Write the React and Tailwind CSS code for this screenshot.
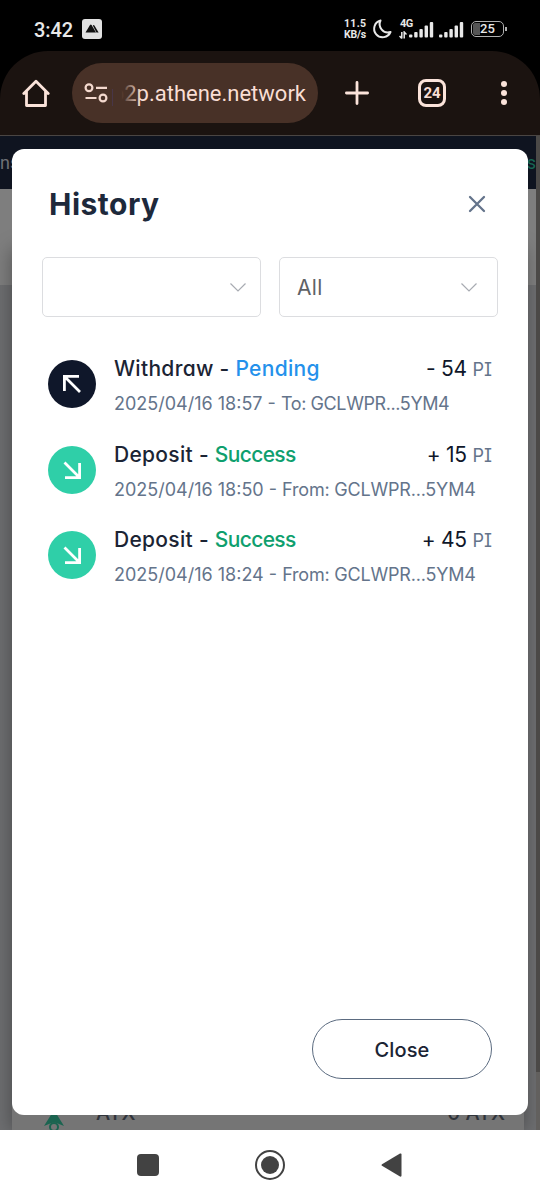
import { useState } from 'react';

const transactions = [
  { type: 'Withdraw', status: 'Pending', date: '2025/04/16 18:57', peer: 'To: GCLWPR...5YM4', amount: '- 54' },
  { type: 'Deposit', status: 'Success', date: '2025/04/16 18:50', peer: 'From: GCLWPR...5YM4', amount: '+ 15' },
  { type: 'Deposit', status: 'Success', date: '2025/04/16 18:24', peer: 'From: GCLWPR...5YM4', amount: '+ 45' },
];

function SignalBars({ className }) {
  return (
    <svg className={className} viewBox="0 0 25 17" fill="#e8e8e8">
      <rect x="0" y="13.5" width="3.4" height="3" rx="1" />
      <rect x="5.2" y="11" width="3.4" height="5.5" rx="1" />
      <rect x="10.4" y="8" width="3.4" height="8.5" rx="1" />
      <rect x="15.6" y="4.5" width="3.4" height="12" rx="1" />
      <rect x="20.8" y="1" width="3.4" height="15.5" rx="1" />
    </svg>
  );
}

function StatusBar() {
  return (
    <div className="h-[51px] flex items-center justify-between pl-[34px] pr-[33px] pt-[7px] text-[#e8e8e8]">
      <div className="flex items-center gap-[9px]">
        <span className="text-[20px] leading-6 font-medium tracking-[-0.1px] pt-[1px]">3:42</span>
        <svg className="w-5 h-5" viewBox="0 0 20 20">
          <rect width="20" height="20" rx="3" fill="#e2e2e2" />
          <path d="M3.5 13.5 8 6q.8-1 1.600 0L14 13.500z" fill="#111" />
          <path d="M10.800 6.500q.8-1 1.800.2l4 6.800h-2.200z" fill="#111" />
        </svg>
      </div>
      <div className="flex items-center">
        <div className="w-[23px] text-[10.500px] leading-[11px] font-bold whitespace-nowrap">
          <p className="tracking-[0.3px]">11.5</p>
          <p className="tracking-[-0.2px]">KB/s</p>
        </div>
        <svg className="w-5 h-5 ml-[5px]" viewBox="0 0 20 20" fill="none" stroke="#e8e8e8" strokeWidth="2" strokeLinejoin="round">
          <path d="M8.500 1.500a8.500 8.500 0 1 0 10 11.500A8.300 8.300 0 0 1 8.500 1.500z" />
        </svg>
        <div className="relative w-[34px] h-[20px] ml-[8px]">
          <span className="absolute left-0 top-[-1px] text-[11px] leading-[11px] font-bold tracking-[-0.5px]">4G</span>
          <svg className="absolute left-[-1px] bottom-0 w-2 h-2" viewBox="0 0 8 8" stroke="#e8e8e8" fill="none" strokeWidth="1.500">
            <path d="M2.800 1v6.500M.5 5l2.300 2.500M5.200 7.500V1l2.300 2.500" />
          </svg>
          <SignalBars className="absolute right-0 bottom-[1px] w-[25px] h-[17px]" />
        </div>
        <SignalBars className="w-[25px] h-[17px] ml-[5px] mt-[1px]" />
        <div className="relative ml-[7px] w-[33px] h-4 rounded-[5px] border-[1.500px] border-[#b0b0b0] flex items-center justify-center overflow-hidden">
          <div className="absolute left-px top-px bottom-px w-[7px] rounded-l-[2px] bg-[#555]" />
          <span className="relative text-[13px] leading-3 font-medium">25</span>
        </div>
        <div className="w-[2px] h-1 bg-[#b0b0b0] ml-[1px]" />
      </div>
    </div>
  );
}

function BrowserBar() {
  return (
    <div className="h-[84px] rounded-t-[48px] bg-[#1b1310] flex items-center pl-[22px] text-[#f9ded4]">
      <svg className="w-7 h-7" viewBox="0 0 28 28" fill="none" stroke="#fbe3da" strokeWidth="2.800" strokeLinejoin="round" strokeLinecap="round">
        <path d="M1.800 14.500 14 2.200l12.200 12.300M4.500 12v14.500h19V12" />
      </svg>
      <div className="ml-[22px] w-[246px] h-[60px] rounded-full bg-[#483127] flex items-center pl-[12px]">
        <svg className="w-6 h-6" viewBox="0 0 24 24" fill="none" stroke="#f4d9ce" strokeWidth="2.200">
          <circle cx="5" cy="6.800" r="3.400" />
          <path d="M12 6.800h11M1.500 17h11" />
          <circle cx="19" cy="17" r="3.400" />
        </svg>
        <div className="relative ml-[5px] w-[193px] h-7 flex justify-end">
          <span className="text-[22px] leading-[30px] whitespace-nowrap">p2p.athene.network</span>
          <div className="absolute left-0 top-0 w-[28px] h-full bg-linear-to-r from-[#483127] from-30% to-transparent" />
        </div>
      </div>
      <svg className="w-6 h-6 ml-[27px]" viewBox="0 0 24 24" stroke="#fbe3da" strokeWidth="2.800" strokeLinecap="round">
        <path d="M12 1.400v21.200M1.400 12h21.200" />
      </svg>
      <div className="ml-[49px] w-7 h-7 rounded-[8px] border-3 border-[#fbe3da] flex items-center justify-center">
        <span className="text-[15px] leading-4 font-bold">24</span>
      </div>
      <div className="ml-[55px] flex flex-col gap-[3px]">
        <div className="w-1.5 h-1.5 rounded-full bg-[#fbe3da]" />
        <div className="w-1.5 h-1.5 rounded-full bg-[#fbe3da]" />
        <div className="w-1.5 h-1.5 rounded-full bg-[#fbe3da]" />
      </div>
    </div>
  );
}

function Select({ value }) {
  return (
    <div className={`w-[219px] h-[60px] rounded-[5px] border-[1.500px] border-[#dcdde0] flex items-center justify-between pl-[17px] ${value ? 'pr-[20px]' : 'pr-[14px]'}`}>
      <span className="text-[21px] tracking-[0.3px] pt-[1px] text-[#606266]">{value}</span>
      <svg className="w-4 h-4" viewBox="0 0 16 16" fill="none" stroke="#a8abb2" strokeWidth="1.200">
        <path d="M.5 4.500 8 12l7.500-7.500" />
      </svg>
    </div>
  );
}

function Transaction({ item }) {
  const isDeposit = item.type === 'Deposit';

  return (
    <div className="flex h-[85.500px]">
      <div className={`mt-[5px] w-12 h-12 rounded-full flex items-center justify-center ${isDeposit ? 'bg-[#2fcfa8]' : 'bg-[#0f172a]'}`}>
        <svg className="w-6 h-6" viewBox="0 0 24 24" fill="none" stroke="#fff" strokeWidth="2.800">
          {isDeposit ? <path d="M4.500 4.500l15 15M19.600 5v14.600H5" /> : <path d="M20 20 5 5M4.400 19V4.400H19" />}
        </svg>
      </div>
      <div className="ml-[18px] flex-1">
        <div className="flex justify-between text-[21px] leading-7 font-medium text-[#1b2434] whitespace-nowrap">
          <p className="tracking-[0.3px]">
            {item.type} - <span className={isDeposit ? 'tracking-[-0.65px] text-[#0f9f6e]' : 'text-[#2491eb]'}>{item.status}</span>
          </p>
          <p className="font-normal text-[#0f172a]">
            <span className="tracking-[-0.3px]">{item.amount}</span> <span className="text-[18px] text-[#64748b]">PI</span>
          </p>
        </div>
        <p className="mt-[6px] text-[18px] leading-7 text-[#64748b] whitespace-nowrap">
          {item.date} - <span className={isDeposit ? 'tracking-[-0.2px]' : 'tracking-[-0.4px]'}>{item.peer}</span>
        </p>
      </div>
    </div>
  );
}

function HistoryDialog({ onClose }) {
  return (
    <div className="absolute left-3 right-3 top-[13px] bottom-[15px] rounded-xl bg-white flex flex-col px-[30px] font-['Inter',sans-serif] [font-feature-settings:'cv11','cv08']">
      <div className="flex items-center justify-between pt-[35px] pl-[7px] pr-[12px]">
        <h1 className="text-[30px] leading-10 font-bold tracking-[0.5px] text-[#1e293b]">History</h1>
        <button onClick={onClose}>
          <svg className="w-[18px] h-[18px]" viewBox="0 0 18 18" stroke="#64748b" strokeWidth="2.300" strokeLinecap="round">
            <path d="M2 2l14 14M16 2 2 16" />
          </svg>
        </button>
      </div>
      <div className="mt-[33px] flex gap-[18px]">
        <Select value="" />
        <Select value="All" />
      </div>
      <div className="mt-[38px] pl-[6px] pr-[6px]">
        {transactions.map((item) => (
          <Transaction key={item.date} item={item} />
        ))}
      </div>
      <div className="mt-auto mb-[36px] pr-[6px] flex justify-end">
        <button onClick={onClose} className="w-[180px] h-[60px] pt-[1px] rounded-full border-[1.500px] border-[#5b6b80] text-[20px] font-medium tracking-[0.1px] text-[#1b2434]">
          Close
        </button>
      </div>
    </div>
  );
}

function NavigationBar() {
  return (
    <div className="h-[70px] bg-white flex items-center justify-center gap-[96px]">
      <div className="w-[22px] h-[22px] rounded-[4px] bg-[#424242]" />
      <div className="w-[30px] h-[30px] rounded-full border-2 border-[#424242] flex items-center justify-center">
        <div className="w-[18px] h-[18px] rounded-full bg-[#424242]" />
      </div>
      <svg className="w-[22px] h-6" viewBox="0 0 22 24" fill="#424242">
        <path d="M1 11.200 19 .6q1.500-.6 1.500 1v21q0 1.600-1.500 1L1 12.800q-1-.8 0-1.600z" />
      </svg>
    </div>
  );
}

export default function App() {
  const [open, setOpen] = useState(true);

  return (
    <div className="w-[540px] h-[1200px] bg-black flex flex-col overflow-hidden font-['Roboto',sans-serif]">
      <StatusBar />
      <BrowserBar />
      <div className="relative flex-1 flex overflow-hidden border-t border-[#4a4543] bg-[#6d6e70]">
        <div className="flex-1 flex flex-col">
          <div className="shrink-0 h-[53px] bg-[#0f1420] flex items-center justify-between text-[18px] text-[#6d7075]">
            <span>ns</span>
            <span className="text-[#176653]">us</span>
          </div>
          <div className="shrink-0 h-24 bg-[#7e7e7e]" />
          <div className="flex-1 -mt-9 mx-3 bg-[#757575] shadow-[0_0_18px_rgba(0,0,0,0.35)] flex items-end justify-between pl-[32px] pr-[19px] font-['Inter',sans-serif] text-[20px] font-medium text-[#30343b]">
            <div className="flex items-end">
              <svg className="w-5 h-5" viewBox="0 0 20 20">
                <path d="M10 0l10 16-10-4L0 16z" fill="#1b6450" />
                <circle cx="10" cy="17" r="4" fill="none" stroke="#1b6450" strokeWidth="2" />
              </svg>
              <span className="ml-8 pb-[2px]">ATX</span>
            </div>
            <span className="pb-[2px]">0 ATX</span>
          </div>
        </div>
        <div className="w-1 flex flex-col bg-[#62605e]">
          <div className="h-[936px] bg-[#4b4947]" />
        </div>
        {open && <HistoryDialog onClose={() => setOpen(false)} />}
      </div>
      <NavigationBar />
    </div>
  );
}
